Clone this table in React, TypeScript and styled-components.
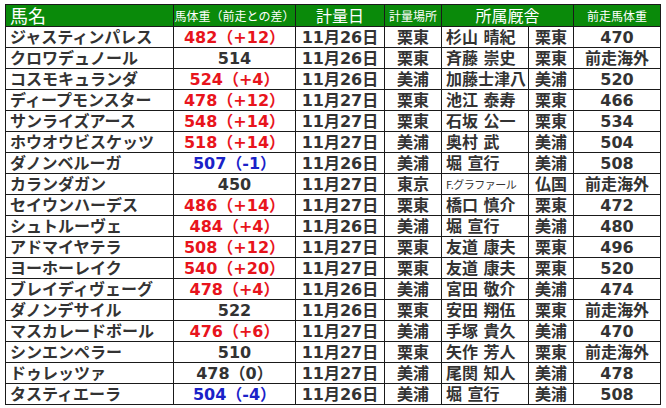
import React from 'react';
import styled, { createGlobalStyle } from 'styled-components';

const GlobalStyle = createGlobalStyle`
    body {
        margin: 0;
        background: #ffffff;
    }
`;

const Wrapper = styled.div`
    padding: 4px 0 0 5px;
    font-family: "DejaVu Sans", "Noto Sans CJK JP", sans-serif;
`;

const Table = styled.table`
    border-collapse: collapse;
    table-layout: fixed;
    width: 655px;

    td,
    th {
        border: 1px solid #1a1a1a;
        padding: 0;
        white-space: nowrap;
    }

    td {
        overflow: hidden;
    }
`;

const HeadCell = styled.th<{ size: number; align?: string }>`
    background: #0a8a0a;
    color: #ffffff;
    font-family: "Noto Sans CJK JP", sans-serif;
    font-weight: 400;
    font-size: ${(p) => p.size}px;
    text-align: ${(p) => p.align || 'center'};
    height: 21px;
    line-height: 21px;
    overflow: visible;
    padding-left: ${(p) => (p.align === 'left' ? '4px' : '0')} !important;
`;

const Cell = styled.td<{ align?: string; tone?: 'plus' | 'minus' }>`
    height: 20px;
    line-height: 19px;
    font-size: 16px;
    font-weight: 700;
    color: ${(p) => (p.tone === 'plus' ? '#e8141c' : p.tone === 'minus' ? '#1a22c8' : '#333333')};
    text-align: ${(p) => p.align || 'center'};
    padding-left: ${(p) => (p.align === 'left' ? '4px' : '0')} !important;
`;

const SmallName = styled.span`
    font-size: 11px;
    font-weight: 400;
    font-family: "Noto Sans CJK JP", sans-serif;
    letter-spacing: -0.5px;
`;

type Row = {
    name: string;
    weight: string;
    tone?: 'plus' | 'minus';
    date: string;
    place: string;
    trainer: string;
    region: string;
    prev: string;
};

const rows: Row[] = [
    { name: 'ジャスティンパレス', weight: '482（+12）', tone: 'plus', date: '11月26日', place: '栗東', trainer: '杉山 晴紀', region: '栗東', prev: '470' },
    { name: 'クロワデュノール', weight: '514', date: '11月26日', place: '栗東', trainer: '斉藤 崇史', region: '栗東', prev: '前走海外' },
    { name: 'コスモキュランダ', weight: '524（+4）', tone: 'plus', date: '11月26日', place: '美浦', trainer: '加藤士津八', region: '美浦', prev: '520' },
    { name: 'ディープモンスター', weight: '478（+12）', tone: 'plus', date: '11月27日', place: '栗東', trainer: '池江 泰寿', region: '栗東', prev: '466' },
    { name: 'サンライズアース', weight: '548（+14）', tone: 'plus', date: '11月27日', place: '栗東', trainer: '石坂 公一', region: '栗東', prev: '534' },
    { name: 'ホウオウビスケッツ', weight: '518（+14）', tone: 'plus', date: '11月27日', place: '美浦', trainer: '奥村 武', region: '美浦', prev: '504' },
    { name: 'ダノンベルーガ', weight: '507（-1）', tone: 'minus', date: '11月26日', place: '美浦', trainer: '堀 宣行', region: '美浦', prev: '508' },
    { name: 'カランダガン', weight: '450', date: '11月27日', place: '東京', trainer: 'F.グラファール', region: '仏国', prev: '前走海外' },
    { name: 'セイウンハーデス', weight: '486（+14）', tone: 'plus', date: '11月27日', place: '栗東', trainer: '橋口 慎介', region: '栗東', prev: '472' },
    { name: 'シュトルーヴェ', weight: '484（+4）', tone: 'plus', date: '11月26日', place: '美浦', trainer: '堀 宣行', region: '美浦', prev: '480' },
    { name: 'アドマイヤテラ', weight: '508（+12）', tone: 'plus', date: '11月27日', place: '栗東', trainer: '友道 康夫', region: '栗東', prev: '496' },
    { name: 'ヨーホーレイク', weight: '540（+20）', tone: 'plus', date: '11月27日', place: '栗東', trainer: '友道 康夫', region: '栗東', prev: '520' },
    { name: 'ブレイディヴェーグ', weight: '478（+4）', tone: 'plus', date: '11月26日', place: '美浦', trainer: '宮田 敬介', region: '美浦', prev: '474' },
    { name: 'ダノンデサイル', weight: '522', date: '11月26日', place: '栗東', trainer: '安田 翔伍', region: '栗東', prev: '前走海外' },
    { name: 'マスカレードボール', weight: '476（+6）', tone: 'plus', date: '11月27日', place: '美浦', trainer: '手塚 貴久', region: '美浦', prev: '470' },
    { name: 'シンエンペラー', weight: '510', date: '11月27日', place: '栗東', trainer: '矢作 芳人', region: '栗東', prev: '前走海外' },
    { name: 'ドゥレッツァ', weight: '478（0）', date: '11月27日', place: '美浦', trainer: '尾関 知人', region: '美浦', prev: '478' },
    { name: 'タスティエーラ', weight: '504（-4）', tone: 'minus', date: '11月26日', place: '美浦', trainer: '堀 宣行', region: '美浦', prev: '508' },
];

const App: React.FC = () => {
    return (
        <Wrapper>
            <GlobalStyle />
            <Table>
                <colgroup>
                    <col style={{ width: 168 }} />
                    <col style={{ width: 122 }} />
                    <col style={{ width: 89 }} />
                    <col style={{ width: 57 }} />
                    <col style={{ width: 87 }} />
                    <col style={{ width: 45 }} />
                    <col style={{ width: 87 }} />
                </colgroup>
                <thead>
                    <tr>
                        <HeadCell size={18} align="left">馬名</HeadCell>
                        <HeadCell size={12}>馬体重（前走との差）</HeadCell>
                        <HeadCell size={16}>計量日</HeadCell>
                        <HeadCell size={12}>計量場所</HeadCell>
                        <HeadCell size={16} colSpan={2}>所属厩舎</HeadCell>
                        <HeadCell size={12}>前走馬体重</HeadCell>
                    </tr>
                </thead>
                <tbody>
                    {rows.map((r) => (
                        <tr key={r.name}>
                            <Cell align="left">{r.name}</Cell>
                            <Cell tone={r.tone}>{r.weight}</Cell>
                            <Cell>{r.date}</Cell>
                            <Cell>{r.place}</Cell>
                            <Cell align="left">
                                {r.trainer.startsWith('F.') ? <SmallName>{r.trainer}</SmallName> : r.trainer}
                            </Cell>
                            <Cell>{r.region}</Cell>
                            <Cell>{r.prev}</Cell>
                        </tr>
                    ))}
                </tbody>
            </Table>
        </Wrapper>
    );
};

export default App;
